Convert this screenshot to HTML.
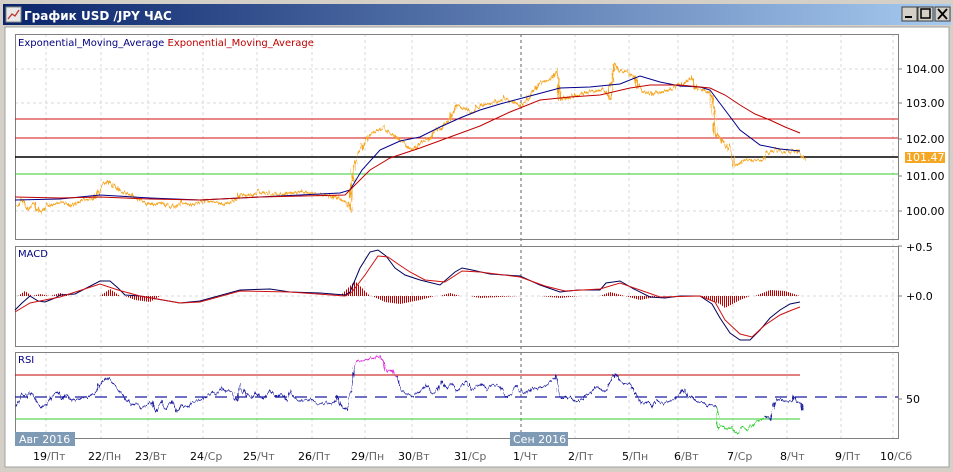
<!DOCTYPE html>
<html><head><meta charset="utf-8"><style>
html,body{margin:0;padding:0;width:953px;height:472px;overflow:hidden;background:#d4d0c8;}
.t{font-family:"DejaVu Sans","Liberation Sans",sans-serif;}
</style></head><body>
<svg width="953" height="472" xmlns="http://www.w3.org/2000/svg" style="display:block">
<defs>
<linearGradient id="tb" x1="0" x2="1"><stop offset="0" stop-color="#0a246a"/><stop offset="1" stop-color="#a6caf0"/></linearGradient>
<pattern id="st" width="2" height="4" patternUnits="userSpaceOnUse"><rect width="1" height="4" fill="#c00000"/></pattern>
<filter id="jg" x="-5%" y="-20%" width="110%" height="140%"><feTurbulence type="turbulence" baseFrequency="0.35 0.05" numOctaves="2" seed="3"/><feDisplacementMap in="SourceGraphic" scale="7" xChannelSelector="G" yChannelSelector="R"/></filter>
<filter id="jg2" x="-5%" y="-20%" width="110%" height="140%"><feTurbulence type="turbulence" baseFrequency="0.25 0.05" numOctaves="2" seed="7"/><feDisplacementMap in="SourceGraphic" scale="6" xChannelSelector="G" yChannelSelector="R"/></filter>
</defs>
<rect x="0" y="0" width="953" height="472" fill="#d4d0c8"/>
<rect x="3" y="4" width="948" height="21" fill="url(#tb)"/>
<rect x="6" y="7" width="15" height="15" fill="#e8e8e8" stroke="#888"/>
<polyline points="8,19 12,14 15,16 19,10" fill="none" stroke="#c03030" stroke-width="1.3"/>
<text x="24" y="20" class="t" font-size="12" font-weight="bold" fill="#fff">График USD /JPY  ЧАС</text>
<g fill="#d4d0c8" stroke="#404040"><rect x="902" y="7" width="15" height="14"/><rect x="918" y="7" width="15" height="14"/><rect x="935" y="7" width="15" height="14"/></g>
<rect x="905" y="16" width="7" height="2" fill="#000"/>
<rect x="921" y="9" width="9" height="9" fill="none" stroke="#000" stroke-width="1.5"/>
<path d="M938 9 L947 19 M947 9 L938 19" stroke="#000" stroke-width="1.8"/>
<rect x="5" y="27" width="944" height="440" fill="#fff" stroke="#a0a0a0"/>
<g stroke="#d8d8d8" stroke-dasharray="3,3">
<path d="M46 34V440 M101 34V440 M148 34V440 M203 34V440 M257 34V440 M312 34V440 M365 34V440 M412 34V440 M467 34V440 M575 34V440 M629 34V440 M678 34V440 M733 34V440 M787 34V440 M841 34V440 M893 34V440"/>
<path d="M15 69H898 M15 103H898 M15 211H898 M15 296H898"/>
</g>
<path d="M521 34V440" stroke="#606060" stroke-dasharray="3,3"/>
<g fill="none" stroke="#808080"><rect x="15.5" y="34.5" width="883" height="205"/><rect x="15.5" y="246.5" width="883" height="100"/><rect x="15.5" y="352.5" width="883" height="86"/></g>
<g class="t" font-size="11" fill="#000">
<text x="906" y="73">104.00</text><text x="906" y="107">103.00</text><text x="906" y="143">102.00</text><text x="906" y="180">101.00</text><text x="906" y="215">100.00</text>
<text x="906" y="251">+0.5</text><text x="906" y="300">+0.0</text><text x="906" y="403">50</text>
</g>
<path d="M898 69h4M898 103h4M898 139h4M898 176h4M898 211h4M898 246h4M898 296h4M898 399h4" stroke="#808080"/>
<rect x="905" y="152" width="40" height="11" fill="#f5a623"/>
<text x="906" y="161" class="t" font-size="11" fill="#fff">101.47</text>
<text x="18" y="46" class="t" font-size="10" fill="#000080">Exponential_Moving_Average <tspan fill="#c00000">Exponential_Moving_Average</tspan></text>
<path d="M15 119H898 M15 138H898" stroke="#d01010"/>
<path d="M15 157H898" stroke="#000" stroke-width="1.6"/>
<path d="M15 174H898" stroke="#33cc33"/>
<g filter="url(#jg)">
<polyline fill="none" stroke="#f5a623" stroke-width="1.8" stroke-linejoin="round" points="15,204 20,198 25,207 32,202 40,211 48,203 60,200 70,204 80,198 90,197 97,192 100,183 105,179 112,184 120,190 130,194 140,199 150,203 160,200 170,206 180,201 190,203 200,200 210,199 220,202 230,200 240,193 250,193 260,190 270,194 280,193 300,190 320,193 335,196 345,200 348,211 350,190 352,165 356,152 360,147 367,134 375,129 382,127 390,132 395,136 402,140 410,147 415,146 420,140 428,136 433,130 440,126 447,118 455,104 462,106 470,111 478,104 490,101 498,99 505,97 512,100 520,104 528,94 535,86 540,80 548,77 555,69 558,97 565,96 575,94 585,91 600,87 605,92 608,97 610,82 612,62 618,70 625,69 632,75 640,90 650,92 660,90 670,87 680,83 686,78 690,76 695,87 702,88 710,94 712,112 714,133 720,138 725,144 730,150 733,165 738,161 742,158 750,158 760,158 766,152 772,149 780,150 790,151 796,150 800,154 803,158"/>
</g>
<polyline fill="none" stroke="#00008b" stroke-width="1" points="15,200 60,199 100,195 150,198 200,200 260,197 340,193 350,190 362,170 380,150 400,141 420,137 440,127 460,118 480,110 500,104 530,96 560,88 590,87 620,84 640,76 660,82 680,86 700,87 710,90 725,110 740,130 760,145 780,149 800,151"/>
<polyline fill="none" stroke="#c00000" stroke-width="1" points="15,197 60,198 100,197 150,199 200,200 260,197 345,195 358,182 370,170 390,158 420,148 450,137 480,126 510,112 540,100 570,97 600,95 630,88 650,85 680,85 710,88 725,95 740,105 755,114 770,120 785,127 800,133"/>
<path fill="url(#st)" d="M18 296 L25 291 L32 296 L40 294 L50 296 L60 293 L70 296 Z M100 296 L110 289 L120 296 Z M125 296 L135 300 L150 302 L160 296 Z M340 296 L355 281 L370 296 Z M372 296 L385 302 L400 304 L420 300 L435 296 Z M440 296 L450 293 L460 296 Z M470 296 L480 298 L520 296 Z M540 296 L560 298 L580 296 Z M600 296 L610 292 L625 296 L640 300 L660 296 Z M700 296 L720 304 L725 308 L740 300 L750 296 Z M755 296 L770 290 L785 291 L800 296 Z"/>
<polyline fill="none" stroke="#00005a" stroke-width="1" points="15,310 22,303 30,296 38,301 45,302 55,298 60,295 75,294 100,281 110,281 118,288 125,295 140,296 180,303 200,301 240,290 270,289 290,292 320,293 345,295 350,292 360,268 370,252 378,250 386,256 395,268 405,275 420,280 440,285 455,272 462,268 472,270 490,274 520,276 540,285 560,292 578,290 600,290 606,283 620,281 634,289 650,297 665,298 680,296 700,296 712,304 720,318 730,333 740,340 750,340 760,330 770,318 780,310 790,304 800,302"/>
<polyline fill="none" stroke="#d01010" stroke-width="1" points="15,312 30,303 45,300 60,297 100,284 118,290 140,296 180,303 200,302 240,291 290,292 345,296 352,292 365,275 378,256 388,257 398,264 410,272 425,280 445,282 462,271 480,272 520,277 545,286 565,291 600,289 620,283 640,290 660,297 700,296 715,302 725,320 740,334 752,337 765,325 780,315 792,310 800,307"/>
<path d="M15 375H800" stroke="#c00000"/>
<path d="M15 419H800" stroke="#33cc33"/>
<path d="M15 397H898" stroke="#1a1aa0" stroke-width="1.3" stroke-dasharray="12,8"/>
<g filter="url(#jg2)">
<polyline fill="none" stroke="#1a1aa0" stroke-width="1" points="15,404 20,393 26,396 30,391 35,401 40,406 45,402 52,392 56,390 60,397 65,393 70,399 75,398 80,395 85,396 90,393 97,391 100,380 105,376 110,380 115,386 120,393 125,399 130,404 135,402 140,407 145,403 150,401 155,410 160,400 165,409 170,398 175,410 180,404 185,407 190,400 200,397 210,391 215,393 220,385 225,392 230,389 235,400 240,382 245,393 250,396 255,391 260,397 270,390 275,395 280,393 285,399 290,391 295,398 300,399 310,397 315,402 320,404 325,401 330,404 335,396 340,407 345,410 348,397 350,390 352,365"/>
<polyline fill="none" stroke="#dd22dd" stroke-width="1" points="352,365 355,360 362,358 370,356 378,355 382,360 385,370 390,368 395,375"/>
<polyline fill="none" stroke="#1a1aa0" stroke-width="1" points="395,375 400,388 405,392 410,395 415,393 420,388 425,384 430,392 435,391 440,380 445,386 450,382 455,390 460,385 465,380 470,388 475,385 480,382 485,388 490,385 495,383 500,386 505,395 510,392 515,385 520,390 525,393 530,386 535,388 540,386 545,385 550,378 555,374 558,392 560,396 570,396 575,400 580,398 585,393 590,392 595,385 600,388 605,389 607,383 610,375 612,372 615,375 620,381 625,382 630,385 635,395 640,403 645,400 650,405 655,398 660,403 665,400 670,398 675,395 680,392 683,387 686,396 690,394 695,400 700,400 705,404 710,402 715,405"/>
<polyline fill="none" stroke="#22cc22" stroke-width="1" points="715,405 716,418 716,428 720,425 725,428 730,425 735,432 738,431 740,426 745,428 750,424 755,419 760,417 765,414"/>
<polyline fill="none" stroke="#1a1aa0" stroke-width="1" points="765,414 768,418 772,405 775,397 780,398 785,400 790,399 792,394 795,400 800,402 801,408"/>
</g>
<text x="18" y="363" class="t" font-size="10" fill="#000080">RSI</text>
<text x="18" y="257" class="t" font-size="10" fill="#000080">MACD</text>
<rect x="15" y="432" width="60" height="14" fill="#7f9ab5"/>
<text x="19" y="443" class="t" font-size="11" fill="#fff">Авг 2016</text>
<rect x="510" y="432" width="58" height="14" fill="#7f9ab5"/>
<text x="513" y="443" class="t" font-size="11" fill="#fff">Сен 2016</text>
<g class="t" font-size="11" fill="#000">
<text x="33" y="460">19<tspan fill="#666">/Пт</tspan></text>
<text x="88" y="460">22<tspan fill="#666">/Пн</tspan></text>
<text x="135" y="460">23<tspan fill="#666">/Вт</tspan></text>
<text x="190" y="460">24<tspan fill="#666">/Ср</tspan></text>
<text x="243" y="460">25<tspan fill="#666">/Чт</tspan></text>
<text x="298" y="460">26<tspan fill="#666">/Пт</tspan></text>
<text x="351" y="460">29<tspan fill="#666">/Пн</tspan></text>
<text x="398" y="460">30<tspan fill="#666">/Вт</tspan></text>
<text x="454" y="460">31<tspan fill="#666">/Ср</tspan></text>
<text x="513" y="460">1<tspan fill="#666">/Чт</tspan></text>
<text x="568" y="460">2<tspan fill="#666">/Пт</tspan></text>
<text x="622" y="460">5<tspan fill="#666">/Пн</tspan></text>
<text x="674" y="460">6<tspan fill="#666">/Вт</tspan></text>
<text x="727" y="460">7<tspan fill="#666">/Ср</tspan></text>
<text x="780" y="460">8<tspan fill="#666">/Чт</tspan></text>
<text x="835" y="460">9<tspan fill="#666">/Пт</tspan></text>
<text x="880" y="460">10<tspan fill="#666">/Сб</tspan></text>
</g>
</svg>
</body></html>
